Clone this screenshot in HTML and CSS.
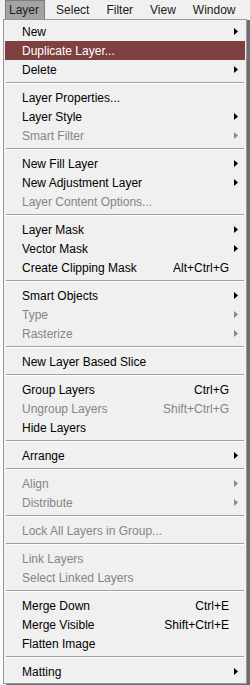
FILE: index.html
```html
<!DOCTYPE html>
<html lang="en">
<head>
    <meta charset="UTF-8">
    <meta name="viewport" content="width=device-width, initial-scale=1.0">
    <title>Layer Menu</title>
    <link rel="stylesheet" href="styles.css">
</head>
<body>

    <header class="menubar">
        <span class="bar-item open">Layer</span>
        <span class="bar-item">Select</span>
        <span class="bar-item">Filter</span>
        <span class="bar-item">View</span>
        <span class="bar-item">Window</span>
    </header>

    <ul class="menu">
        <li class="row"><span class="label">New</span><span class="arrow"></span></li>
        <li class="row active"><span class="label">Duplicate Layer...</span></li>
        <li class="row"><span class="label">Delete</span><span class="arrow"></span></li>
        <li class="sep"></li>
        <li class="row"><span class="label">Layer Properties...</span></li>
        <li class="row"><span class="label">Layer Style</span><span class="arrow"></span></li>
        <li class="row off"><span class="label">Smart Filter</span><span class="arrow"></span></li>
        <li class="sep"></li>
        <li class="row"><span class="label">New Fill Layer</span><span class="arrow"></span></li>
        <li class="row"><span class="label">New Adjustment Layer</span><span class="arrow"></span></li>
        <li class="row off"><span class="label">Layer Content Options...</span></li>
        <li class="sep"></li>
        <li class="row"><span class="label">Layer Mask</span><span class="arrow"></span></li>
        <li class="row"><span class="label">Vector Mask</span><span class="arrow"></span></li>
        <li class="row"><span class="label">Create Clipping Mask</span><span class="key">Alt+Ctrl+G</span></li>
        <li class="sep"></li>
        <li class="row"><span class="label">Smart Objects</span><span class="arrow"></span></li>
        <li class="row off"><span class="label">Type</span><span class="arrow"></span></li>
        <li class="row off"><span class="label">Rasterize</span><span class="arrow"></span></li>
        <li class="sep"></li>
        <li class="row"><span class="label">New Layer Based Slice</span></li>
        <li class="sep"></li>
        <li class="row"><span class="label">Group Layers</span><span class="key">Ctrl+G</span></li>
        <li class="row off"><span class="label">Ungroup Layers</span><span class="key">Shift+Ctrl+G</span></li>
        <li class="row"><span class="label">Hide Layers</span></li>
        <li class="sep"></li>
        <li class="row"><span class="label">Arrange</span><span class="arrow"></span></li>
        <li class="sep"></li>
        <li class="row off"><span class="label">Align</span><span class="arrow"></span></li>
        <li class="row off"><span class="label">Distribute</span><span class="arrow"></span></li>
        <li class="sep"></li>
        <li class="row off"><span class="label">Lock All Layers in Group...</span></li>
        <li class="sep"></li>
        <li class="row off"><span class="label">Link Layers</span></li>
        <li class="row off"><span class="label">Select Linked Layers</span></li>
        <li class="sep"></li>
        <li class="row"><span class="label">Merge Down</span><span class="key">Ctrl+E</span></li>
        <li class="row"><span class="label">Merge Visible</span><span class="key">Shift+Ctrl+E</span></li>
        <li class="row"><span class="label">Flatten Image</span></li>
        <li class="sep"></li>
        <li class="row"><span class="label">Matting</span><span class="arrow"></span></li>
    </ul>

</body>
</html>
```

FILE: styles.css
```css
/* Basic Reset */
* {
    margin: 0;
    padding: 0;
    box-sizing: border-box;
}

body {
    font-family: 'Liberation Sans', Arial, sans-serif;
    font-size: 12px;
    color: #000;
    background-color: #fafafa;
    width: 250px;
    height: 685px;
    overflow: hidden;
}

/* Menu bar */
.menubar {
    height: 19px;
    display: flex;
    gap: 7px;
    padding-left: 5px;
    background-color: #f0f0f0;
}

.bar-item {
    display: flex;
    align-items: center;
    padding: 0 5px 0 3px;
    border: 1px solid transparent;
    color: #1a1a1a;
}

.bar-item.open {
    background-color: #a3a3a3;
    border-color: #7d7d7d;
    border-bottom: none;
}

/* Dropdown */
.menu {
    list-style: none;
    width: 244px;
    margin-left: 3px;
    padding: 2px 1px;
    background-color: #f0f0f0;
    border: 1px solid #979797;
    box-shadow: 3px 1px 0 #6e6e6e;
}

.row {
    height: 19px;
    display: flex;
    align-items: center;
    padding: 0 7px 0 17px;
}

.row .label {
    flex: 1;
}

.row .key {
    margin-right: 9px;
}

.row .arrow {
    width: 4px;
    height: 7px;
    background-color: #000;
    clip-path: polygon(0 0, 100% 50%, 0 100%);
}

.row.active {
    background-color: #7f4040;
    color: #fff;
}

.row.off {
    color: #858585;
}

.row.off .arrow {
    background-color: #8a8a8a;
}

.sep {
    height: 2px;
    margin: 3px 1px 4px 1px;
    background-color: #a0a0a0;
    border-bottom: 1px solid #fff;
}
```
